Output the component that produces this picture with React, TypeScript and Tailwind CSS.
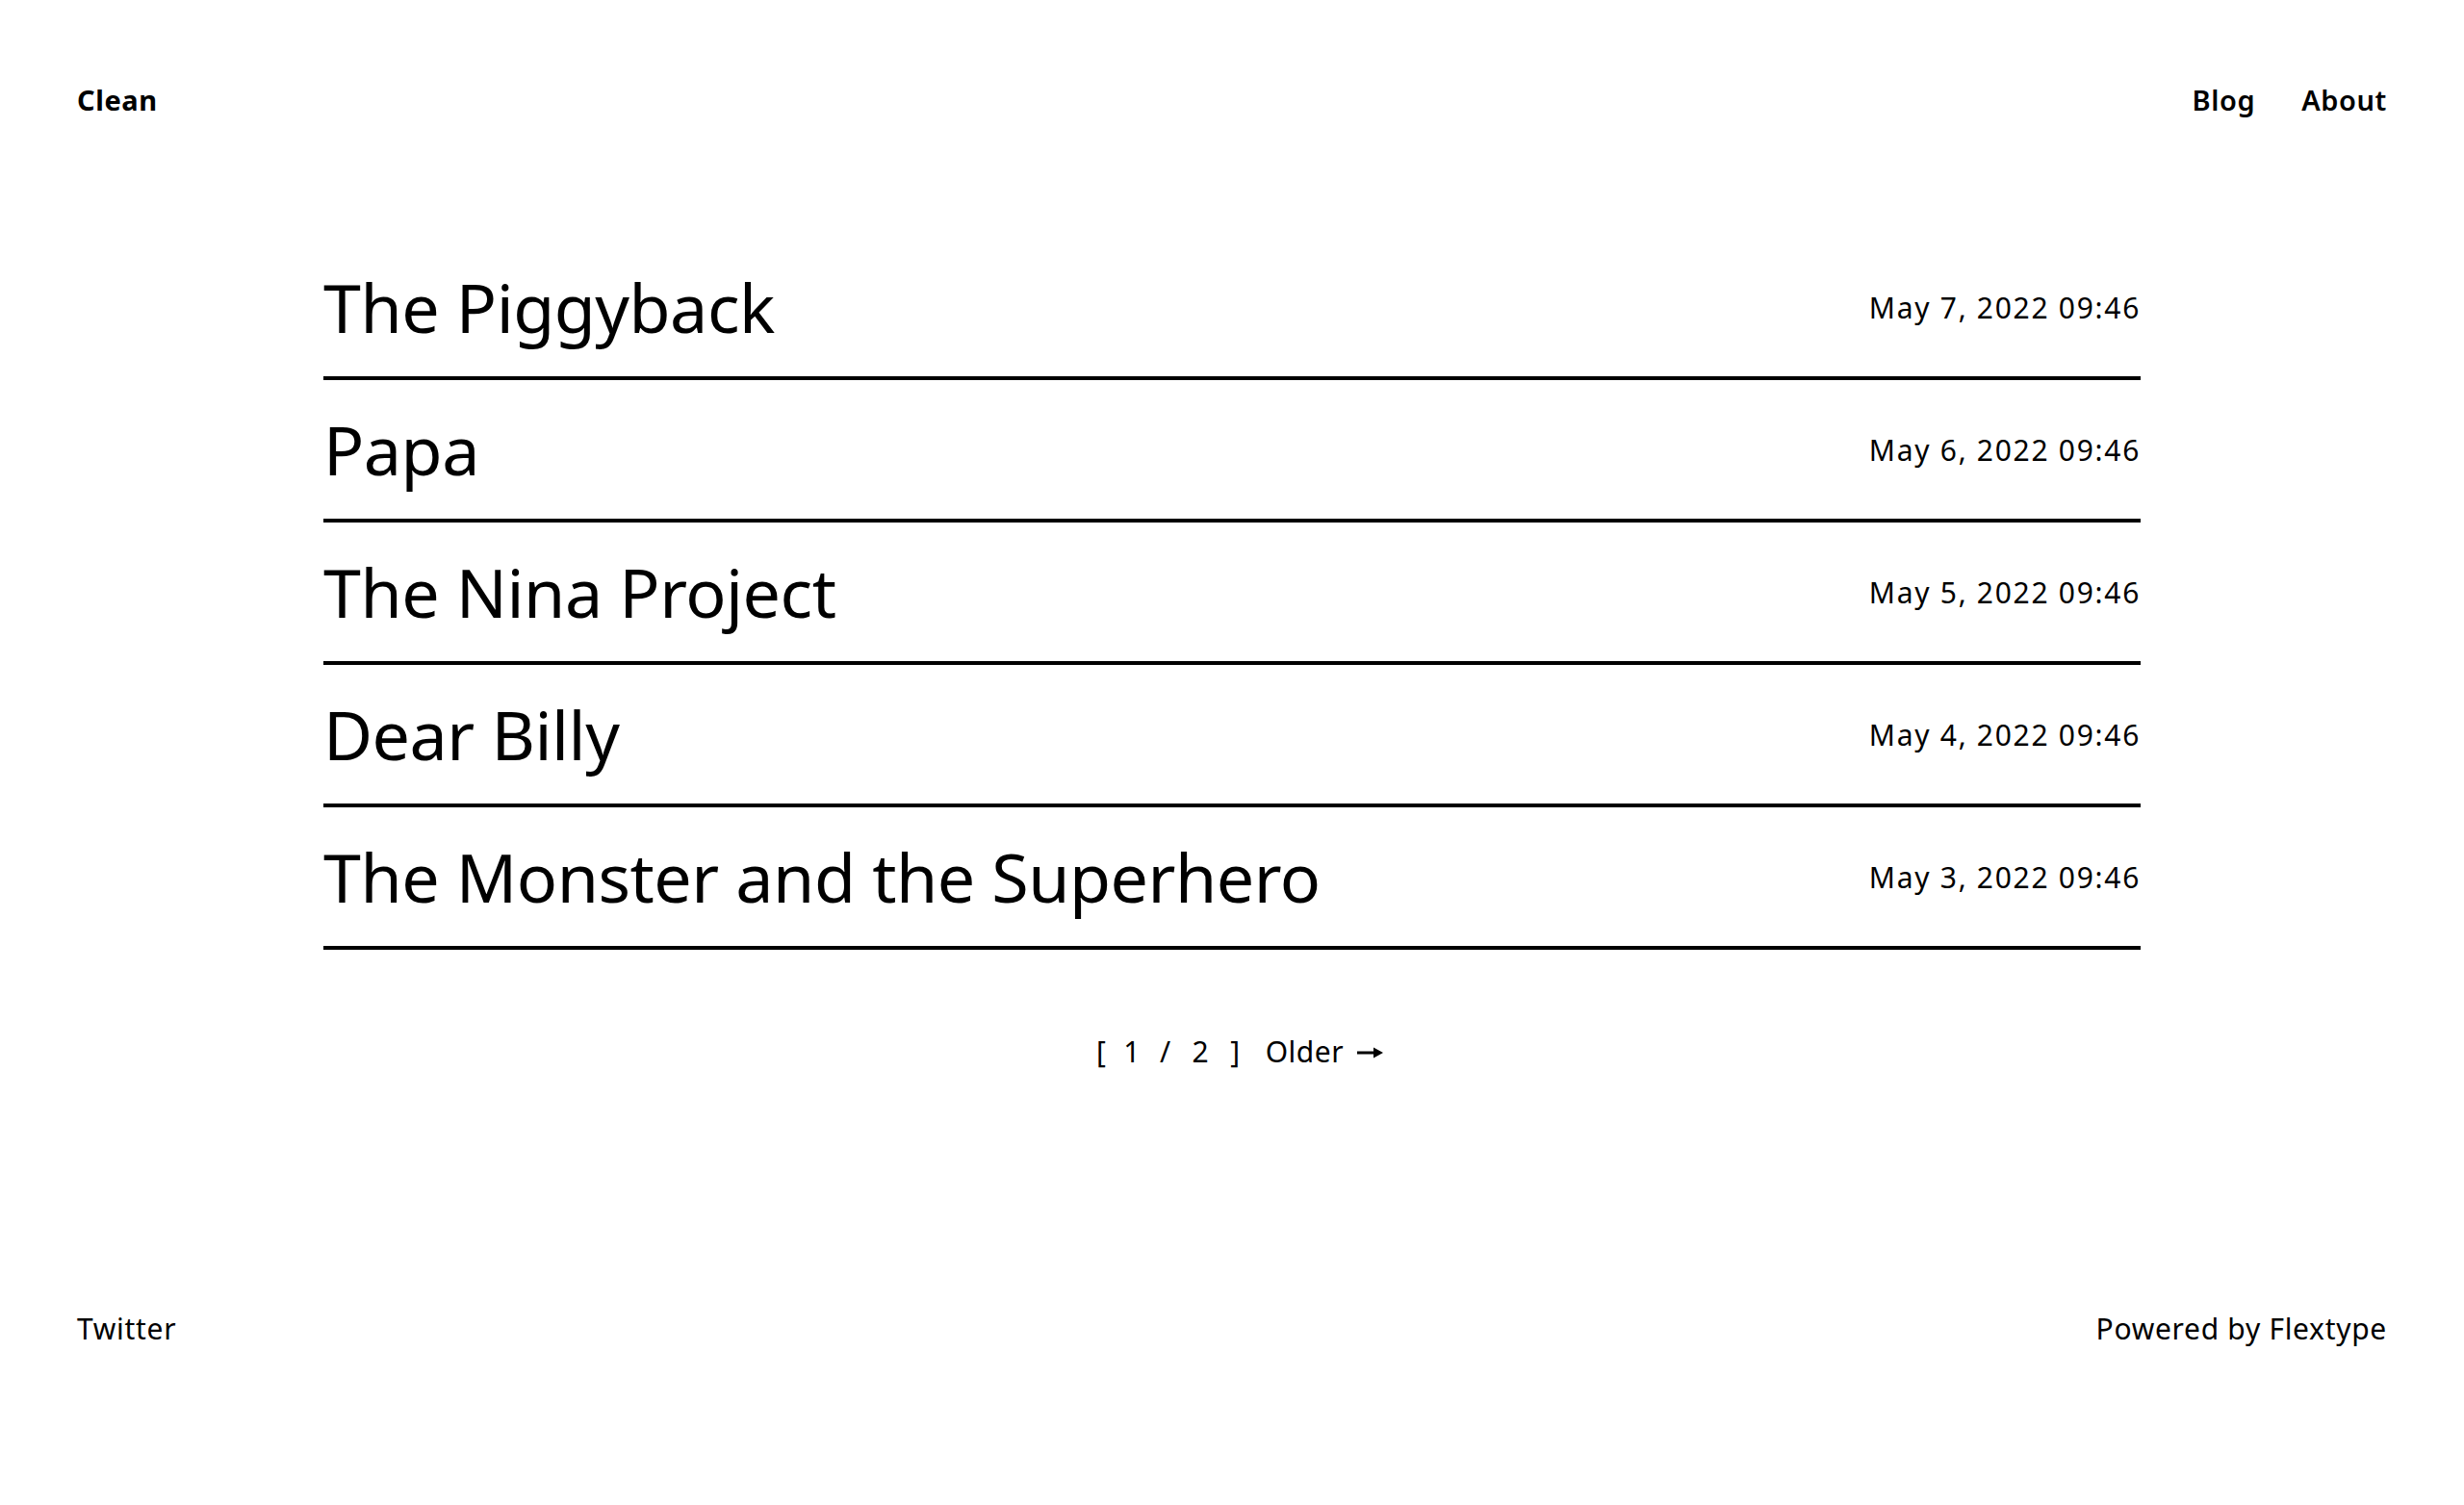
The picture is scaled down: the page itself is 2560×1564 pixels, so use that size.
const posts = [
  { title: 'The Piggyback', date: 'May 7, 2022 09:46' },
  { title: 'Papa', date: 'May 6, 2022 09:46' },
  { title: 'The Nina Project', date: 'May 5, 2022 09:46' },
  { title: 'Dear Billy', date: 'May 4, 2022 09:46' },
  { title: 'The Monster and the Superhero', date: 'May 3, 2022 09:46' },
];

export default function App() {
  return (
    <div className="min-h-screen bg-white text-black font-['Noto_Sans',sans-serif]">
      {/* Header */}
      <header className="flex items-center justify-between px-[80px] pt-[85px]">
        <a className="text-[29px] leading-[38px] font-bold tracking-[0.6px]">Clean</a>
        <nav className="flex gap-[48px] text-[29px] leading-[38px] font-semibold tracking-[0.6px]">
          <a>Blog</a>
          <a>About</a>
        </nav>
      </header>

      {/* Posts */}
      <main className="mx-auto mt-[124px] w-[1888px]">
        {posts.map((post) => (
          <a
            key={post.title}
            className="flex h-[148px] items-center justify-between border-b-4 border-black"
          >
            <h2 className="text-[70px] leading-none tracking-[-0.5px]">{post.title}</h2>
            <span className="text-[30px] tracking-[1.7px]">{post.date}</span>
          </a>
        ))}

        {/* Pagination */}
        <div className="mt-[86px] flex items-center justify-center gap-[26px] pl-[16px] text-[30px] leading-[40px] tracking-[0.5px]">
          <div className="flex items-center gap-[18px]">
            <span>[</span>
            <span>1</span>
            <span className="pl-[2px] pr-[4px]">/</span>
            <span>2</span>
            <span className="pl-[4px]">]</span>
          </div>
          <a className="flex items-center gap-[14px]">
            Older
            <svg width="27" height="14" viewBox="0 0 27 14" className="mt-[2px]">
              <line x1="0" y1="7" x2="20" y2="7" stroke="black" strokeWidth="3" />
              <path d="M17 1.5 L27 7 L17 12.5 Z" fill="black" />
            </svg>
          </a>
        </div>
      </main>

      {/* Footer */}
      <footer className="mt-[248px] flex items-center justify-between px-[80px] pb-[163px] text-[30px] leading-[40px] tracking-[0.7px]">
        <a>Twitter</a>
        <span>Powered by Flextype</span>
      </footer>
    </div>
  );
}
